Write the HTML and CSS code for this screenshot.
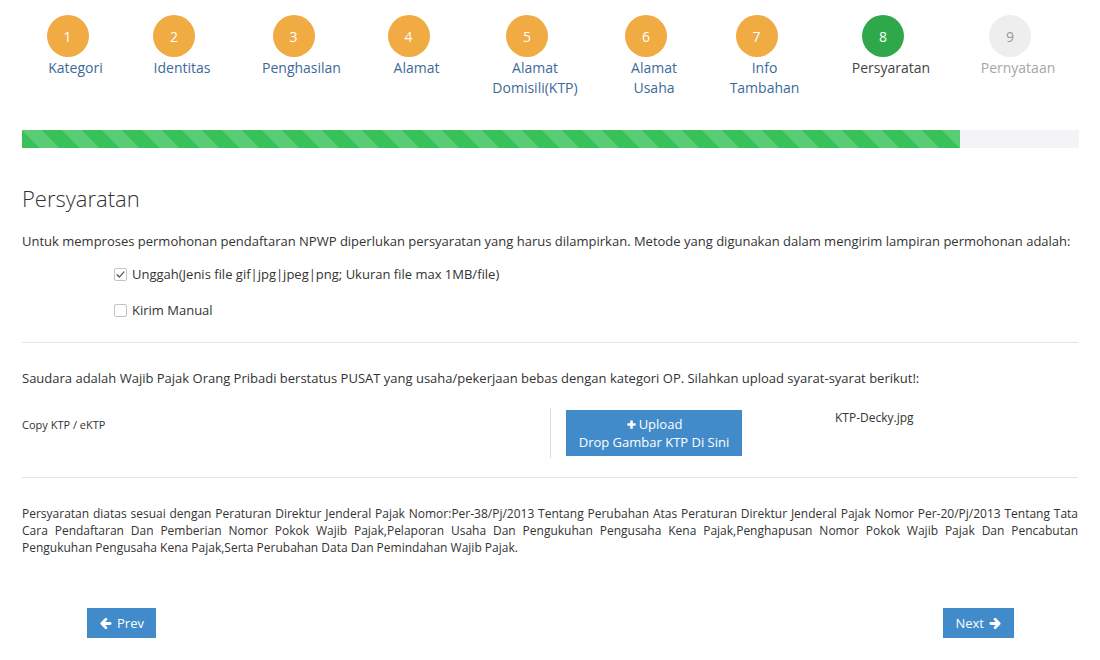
FILE: index.html
```html
<!DOCTYPE html>
<html lang="id">
<head>
<meta charset="utf-8">
<title>Persyaratan</title>
<link rel="stylesheet" href="styles.css">
</head>
<body>
<div class="container">
  <div class="steps">
    <div class="step done"><span class="num">1</span><span class="label">Kategori</span></div>
    <div class="step done"><span class="num">2</span><span class="label">Identitas</span></div>
    <div class="step done"><span class="num">3</span><span class="label">Penghasilan</span></div>
    <div class="step done"><span class="num">4</span><span class="label">Alamat</span></div>
    <div class="step done"><span class="num">5</span><span class="label">Alamat<br>Domisili(KTP)</span></div>
    <div class="step done"><span class="num">6</span><span class="label">Alamat<br>Usaha</span></div>
    <div class="step done"><span class="num">7</span><span class="label">Info<br>Tambahan</span></div>
    <div class="step active"><span class="num">8</span><span class="label">Persyaratan</span></div>
    <div class="step todo"><span class="num">9</span><span class="label">Pernyataan</span></div>
  </div>

  <div class="progress"><div class="progress-bar" style="width: 88.7%"></div></div>

  <h2 class="title">Persyaratan</h2>
  <p class="intro">Untuk memproses permohonan pendaftaran NPWP diperlukan persyaratan yang harus dilampirkan. Metode yang digunakan dalam mengirim lampiran permohonan adalah:</p>

  <div class="options">
    <label class="check-row">
      <span class="box"><svg viewBox="0 0 12 12" width="11" height="11"><path d="M2.2 6.3 L4.8 8.8 L9.8 3.2" fill="none" stroke="#555" stroke-width="1.4" stroke-linecap="round" stroke-linejoin="round"/></svg></span>
      <span>Unggah(Jenis file gif|jpg|jpeg|png; Ukuran file max 1MB/file)</span>
    </label>
    <label class="check-row">
      <span class="box"></span>
      <span>Kirim Manual</span>
    </label>
  </div>

  <hr class="rule rule-1">

  <p class="status">Saudara adalah Wajib Pajak Orang Pribadi berstatus PUSAT yang usaha/pekerjaan bebas dengan kategori OP. Silahkan upload syarat-syarat berikut!:</p>

  <div class="upload-row">
    <div class="doc-name">Copy KTP / eKTP</div>
    <div class="doc-upload">
      <div class="upload-btn">
        <span class="up-line"><svg viewBox="0 0 12 12" width="11" height="11"><path d="M6 1.5 V10.5 M1.5 6 H10.5" stroke="#fff" stroke-width="2.8"/></svg>Upload</span>
        <span>Drop Gambar KTP Di Sini</span>
      </div>
      <div class="file-name">KTP-Decky.jpg</div>
    </div>
  </div>

  <hr class="rule rule-2">

  <p class="legal">Persyaratan diatas sesuai dengan Peraturan Direktur Jenderal Pajak Nomor:Per-38/Pj/2013 Tentang Perubahan Atas Peraturan Direktur Jenderal Pajak Nomor Per-20/Pj/2013 Tentang Tata Cara Pendaftaran Dan Pemberian Nomor Pokok Wajib Pajak,Pelaporan Usaha Dan Pengukuhan Pengusaha Kena Pajak,Penghapusan Nomor Pokok Wajib Pajak Dan Pencabutan Pengukuhan Pengusaha Kena Pajak,Serta Perubahan Data Dan Pemindahan Wajib Pajak.</p>

  <div class="nav">
    <button class="btn"><svg viewBox="0 0 14 14" width="13" height="13"><path d="M12 7 H3.5 M7.5 2.5 L3 7 L7.5 11.5" fill="none" stroke="#fff" stroke-width="3" stroke-linecap="round" stroke-linejoin="round"/></svg>Prev</button>
    <button class="btn">Next<svg viewBox="0 0 14 14" width="13" height="13"><path d="M2 7 H10.5 M6.5 2.5 L11 7 L6.5 11.5" fill="none" stroke="#fff" stroke-width="3" stroke-linecap="round" stroke-linejoin="round"/></svg></button>
  </div>
</div>
</body>
</html>
```

FILE: styles.css
```css
* { box-sizing: border-box; }

html, body {
  margin: 0;
  padding: 0;
  background: #fff;
}

body {
  font-family: "Open Sans", "Noto Sans", sans-serif;
  color: #333;
  font-size: 13px;
}

.container {
  width: 1100px;
  padding: 0 22px;
}

/* steps */
.steps {
  display: grid;
  grid-template-columns: 91px 122px 117px 113px 124px 114px 107px 146px 108px;
  padding-top: 15px;
  height: 98px;
}

.step {
  display: flex;
  flex-direction: column;
  align-items: center;
  text-align: center;
}

.num {
  width: 42px;
  height: 42px;
  border-radius: 50%;
  display: flex;
  align-items: center;
  justify-content: center;
  font-size: 14px;
  color: #fff;
  background: #f0ab42;
  margin-bottom: 1px;
}

.label {
  font-size: 14px;
  line-height: 20px;
  color: #3b6a99;
  padding-left: 16px;
}

.step.active .num { background: #2fa84c; }
.step.active .label { color: #444; }
.step.todo .num { background: #eeeeee; color: #999; }
.step.todo .label { color: #a6a6a6; }

/* progress */
.progress {
  margin-top: 32px;
  height: 18px;
  background: #f4f4f6;
  width: 1057px;
}

.progress-bar {
  height: 100%;
  background-color: #37c158;
  background-image: linear-gradient(45deg,
    rgba(255,255,255,.18) 25%, transparent 25%,
    transparent 50%, rgba(255,255,255,.18) 50%,
    rgba(255,255,255,.18) 75%, transparent 75%, transparent);
  background-size: 40px 40px;
}

.title {
  font-weight: 300;
  font-size: 22px;
  line-height: 24px;
  margin: 38px 0 0;
  color: #333;
}

.intro {
  margin: 21px 0 0;
  line-height: 20px;
}

.options {
  padding-left: 92px;
  margin-top: 13px;
}

.check-row {
  display: flex;
  align-items: center;
  gap: 5px;
  height: 20px;
  margin-bottom: 16px;
  line-height: 20px;
}

.box {
  width: 13px;
  height: 13px;
  border: 1px solid #c4c4c4;
  border-radius: 2px;
  background: #fff;
  display: flex;
  align-items: center;
  justify-content: center;
}

.rule {
  border: 0;
  border-top: 1px solid #e4e4e4;
  margin: 0;
}

.rule-1 { margin-top: 22px; }

.status {
  margin: 25px 0 0;
  line-height: 20px;
}

.upload-row {
  display: flex;
  margin-top: 22px;
  height: 50px;
}

.doc-name {
  width: 528px;
  font-size: 11px;
  padding-top: 8px;
  line-height: 14px;
}

.doc-upload {
  flex: 1;
  border-left: 1px solid #dcdcdc;
  padding-left: 15px;
  display: flex;
  align-items: flex-start;
  margin-top: -2px;
  height: 50px;
}

.upload-btn {
  width: 176px;
  height: 46px;
  margin-top: 2px;
  background: #428bca;
  color: #fff;
  display: flex;
  flex-direction: column;
  align-items: center;
  justify-content: center;
  font-size: 13px;
  line-height: 18px;
}

.up-line {
  display: flex;
  align-items: center;
  gap: 2px;
}

.file-name {
  margin-left: 93px;
  font-size: 12px;
  padding-top: 1px;
  line-height: 18px;
}

.rule-2 { margin-top: 17px; }

.legal {
  margin: 27px 0 0;
  font-size: 12px;
  line-height: 17px;
  text-align: justify;
  color: #333;
}

.nav {
  display: flex;
  justify-content: space-between;
  padding: 0 64px 0 65px;
  margin-top: 52px;
}

.btn {
  height: 30px;
  padding: 0 12px;
  border: 0;
  background: #428bca;
  color: #fff;
  font-family: "Open Sans", "Noto Sans", sans-serif;
  font-size: 13px;
  display: flex;
  align-items: center;
  gap: 5px;
}
```
